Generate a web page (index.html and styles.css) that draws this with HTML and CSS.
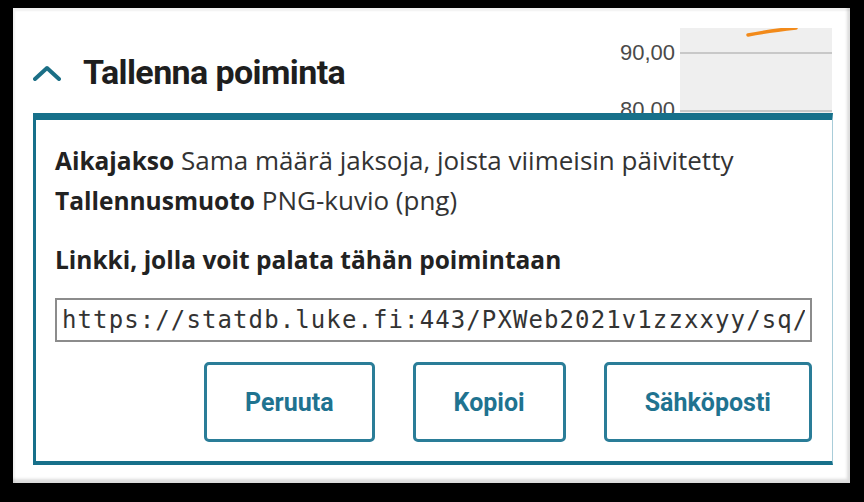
FILE: index.html
```html
<!DOCTYPE html>
<html lang="fi">
<head>
  <meta charset="UTF-8">
  <title>Tallenna poiminta</title>
  <meta name="viewport" content="width=device-width, initial-scale=1.0">
  <link rel="stylesheet" href="styles.css">
</head>
<body>

  <div class="card">
    <div class="header">
      <div class="heading">
        <svg class="chevron" width="28" height="16" viewBox="0 0 28 16">
          <polyline points="2,14 14,3 26,14" fill="none" stroke="#1b6f86" stroke-width="4" stroke-linecap="round" stroke-linejoin="round"/>
        </svg>
        <h2>Tallenna poiminta</h2>
      </div>

      <div class="chart">
        <div class="axis">
          <span class="tick first">90,00</span>
          <span class="tick">80,00</span>
        </div>
        <div class="plot">
          <div class="grid g1"></div>
          <div class="grid g2"></div>
          <svg class="line" width="152" height="20" viewBox="0 0 152 20">
            <path d="M68 7 Q 88 3 116 0" fill="none" stroke="#f28a1a" stroke-width="3.5" stroke-linecap="round"/>
          </svg>
        </div>
      </div>
    </div>

    <div class="panel">
      <p class="row"><b>Aikajakso</b> Sama määrä jaksoja, joista viimeisin päivitetty</p>
      <p class="row"><b>Tallennusmuoto</b> PNG-kuvio (png)</p>

      <p class="row link-label"><b>Linkki, jolla voit palata tähän poimintaan</b></p>
      <input class="link" type="text" readonly value="https://statdb.luke.fi:443/PXWeb2021v1zzxxyy/sq/8f2c41a7-0e3b-4d2a">

      <div class="buttons">
        <button>Peruuta</button>
        <button>Kopioi</button>
        <button>Sähköposti</button>
      </div>
    </div>
  </div>

</body>
</html>
```

FILE: styles.css
```css
html, body {
  margin: 0;
  background: #000;
}

body {
  padding: 8px 14px 19px 13px;
  font-family: "Open Sans", "Liberation Sans", sans-serif;
  color: #333;
}

.card {
  background: #fff;
  height: 475px;
  box-sizing: border-box;
  padding: 0 17px 0 20px;
  box-shadow: inset 2px 3px 2px rgba(0, 0, 0, 0.06), inset -3px -4px 3px rgba(0, 0, 0, 0.14);
}

.header {
  display: flex;
  justify-content: space-between;
  align-items: flex-start;
  height: 105px;
  overflow: hidden;
}

.heading {
  display: flex;
  align-items: center;
  gap: 22px;
  margin-top: 44px;
}

.chevron {
  display: block;
  margin-top: 2px;
}

h2 {
  margin: 0;
  font-family: Roboto, "Liberation Sans", sans-serif;
  font-weight: 700;
  font-size: 34px;
  line-height: 40px;
  letter-spacing: -0.6px;
  color: #1e1e1e;
}

.chart {
  display: flex;
  gap: 5px;
  margin-top: 20px;
  margin-right: 1px;
}

.axis {
  display: flex;
  flex-direction: column;
  align-items: flex-end;
  font-family: "Liberation Sans", Arial, sans-serif;
  font-size: 22px;
  color: #4a4a4a;
}

.tick {
  line-height: 24px;
  margin-top: 33px;
}

.tick.first {
  margin-top: 13px;
}

.plot {
  position: relative;
  width: 152px;
  height: 100px;
  background: #efefef;
}

.grid {
  position: absolute;
  left: 0;
  right: 0;
  height: 2px;
  background: #c8c8c8;
}

.g1 { top: 24px; }
.g2 { top: 82px; }

.line {
  position: absolute;
  top: 0;
  left: 0;
}

.panel {
  border-top: 7px solid #17708a;
  border-left: 3px solid #17708a;
  border-bottom: 4px solid #17708a;
  border-right: 1px solid #a9cdd9;
  padding: 20px 20px 19px 19px;
}

.row {
  margin: 0;
  height: 40px;
  font-size: 26px;
  line-height: 40px;
}

.row b {
  font-size: 24.5px;
  line-height: 1;
  color: #222;
}

.link-label {
  margin-top: 19px;
}

.link {
  display: block;
  width: 100%;
  height: 44px;
  box-sizing: border-box;
  margin-top: 19px;
  padding: 0 5px;
  border: 2px solid #8c8c8c;
  font-family: "DejaVu Sans Mono", "Liberation Mono", monospace;
  font-size: 24px;
  letter-spacing: 1.1px;
  color: #333;
  background: #fff;
}

.buttons {
  display: flex;
  justify-content: flex-end;
  gap: 38px;
  margin-top: 20px;
}

button {
  height: 80px;
  padding: 0 38px;
  background: #fff;
  border: 3px solid #2a7d98;
  border-radius: 5px;
  font-family: Roboto, "Liberation Sans", sans-serif;
  font-weight: 700;
  font-size: 25px;
  color: #1f7390;
  cursor: pointer;
}
```
